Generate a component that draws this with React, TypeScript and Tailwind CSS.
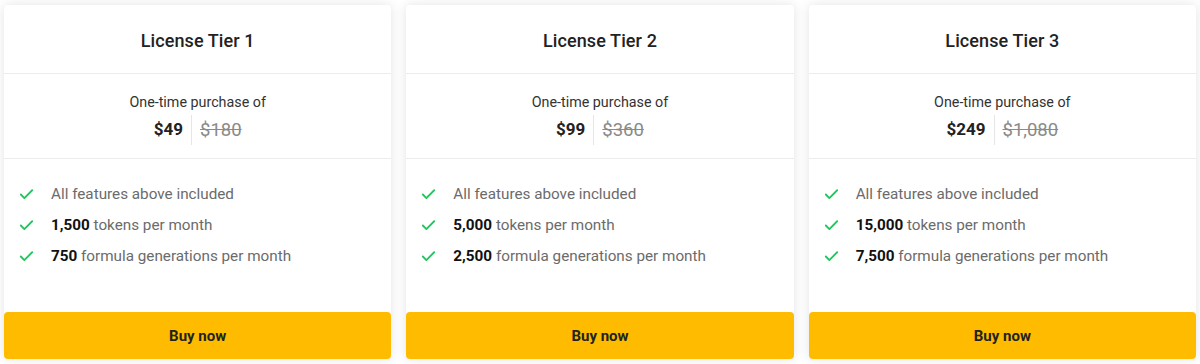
import { Check } from 'lucide-react';

interface Tier {
  name: string;
  price: string;
  was: string;
  tokens: string;
  formulas: string;
}

const tiers: Tier[] = [
  { name: 'License Tier 1', price: '$49', was: '$180', tokens: '1,500', formulas: '750' },
  { name: 'License Tier 2', price: '$99', was: '$360', tokens: '5,000', formulas: '2,500' },
  { name: 'License Tier 3', price: '$249', was: '$1,080', tokens: '15,000', formulas: '7,500' },
];

function TierCard({ tier }: { tier: Tier }) {
  return (
    <div className="flex flex-col bg-white rounded-[4px] shadow-[0_0_12px_rgba(0,0,0,0.11)]">
      <div className="h-[69px] flex items-center justify-center pt-[2px] border-b border-[#ececec]">
        <h3 className="text-[18px] font-medium text-[#222] tracking-[0.1px]">{tier.name}</h3>
      </div>

      <div className="h-[85px] flex flex-col items-center pt-[18px] border-b border-[#ececec]">
        <p className="text-[14.3px] text-[#333] leading-[20px]">One-time purchase of</p>
        <div className="flex items-center mt-[3px] h-[30px]">
          <span className="text-[17px] font-bold text-[#222] pr-[8px]">{tier.price}</span>
          <span className="text-[18.5px] text-[#8a8a8a] line-through pl-[8px] border-l border-[#e6e6e6] leading-[30px]">
            {tier.was}
          </span>
        </div>
      </div>

      <ul className="h-[153px] pt-[25px] px-[14px] flex flex-col gap-[11px] text-[15.25px] leading-[20px] text-[#6b6b6b]">
        <li className="flex items-center gap-[16px]">
          <Check className="w-[17px] h-[17px] text-[#22c55e] shrink-0" strokeWidth={2.6} />
          <span>All features above included</span>
        </li>
        <li className="flex items-center gap-[16px]">
          <Check className="w-[17px] h-[17px] text-[#22c55e] shrink-0" strokeWidth={2.6} />
          <span>
            <b className="font-bold text-[#111]">{tier.tokens}</b> tokens per month
          </span>
        </li>
        <li className="flex items-center gap-[16px]">
          <Check className="w-[17px] h-[17px] text-[#22c55e] shrink-0" strokeWidth={2.6} />
          <span>
            <b className="font-bold text-[#111]">{tier.formulas}</b> formula generations per month
          </span>
        </li>
      </ul>

      <button className="h-[47px] bg-[#ffbb00] rounded-[4px] text-[15px] font-bold text-[#222] pt-[2px]">
        Buy now
      </button>
    </div>
  );
}

export default function App() {
  return (
    <div
      className="w-[1200px] h-[364px] bg-white px-[4px] pt-[5px] grid grid-cols-3 gap-[15px] content-start"
      style={{ fontFamily: 'Roboto, "Liberation Sans", sans-serif' }}
    >
      {tiers.map((t) => (
        <TierCard key={t.name} tier={t} />
      ))}
    </div>
  );
}
